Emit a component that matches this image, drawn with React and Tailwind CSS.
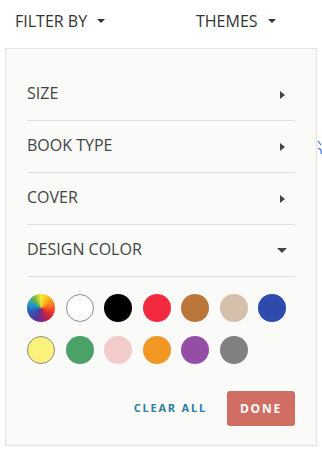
import React from 'react';

const swatches = [
  { name: 'multi', cls: 'bg-[conic-gradient(#f6e936_0deg,#f9b51c_36deg,#f47b20_72deg,#ee3a2c_108deg,#c4203f_144deg,#7a2a8c_180deg,#4b3c9c_216deg,#2f5cb3_252deg,#1a9ad6_288deg,#6bb345_324deg,#f6e936_360deg)]' },
  { name: 'white', cls: 'bg-white border border-[#8a8a8a]' },
  { name: 'black', cls: 'bg-black' },
  { name: 'red', cls: 'bg-[#f2293f]' },
  { name: 'brown', cls: 'bg-[#bb773a]' },
  { name: 'beige', cls: 'bg-[#d3bfaa]' },
  { name: 'blue', cls: 'bg-[#2d4aad]' },
  { name: 'yellow', cls: 'bg-[#faf27c] border border-[#8a8a8a]' },
  { name: 'green', cls: 'bg-[#4aa268]' },
  { name: 'pink', cls: 'bg-[#f2cccb]' },
  { name: 'orange', cls: 'bg-[#f29624]' },
  { name: 'purple', cls: 'bg-[#954ea6]' },
  { name: 'gray', cls: 'bg-[#808080]' },
];

const CaretDown = ({ className = '' }) => (
  <span
    className={`inline-block w-0 h-0 border-l-[4px] border-r-[4px] border-t-[4px] border-l-transparent border-r-transparent border-t-[#333] ${className}`}
  />
);

const CaretRight = () => (
  <span className="inline-block w-0 h-0 border-t-[4px] border-b-[4px] border-l-[5px] border-t-transparent border-b-transparent border-l-[#444]" />
);

const FilterRow = ({ label, open }) => (
  <div className="flex items-center justify-between h-[52px] border-b border-[#e2e0dc]">
    <span className="text-[16px] text-[#444] mb-[3px]">{label}</span>
    {open ? (
      <span className="inline-block w-0 h-0 mr-[8px] border-l-[5px] border-r-[5px] border-t-[5px] border-l-transparent border-r-transparent border-t-[#444]" />
    ) : (
      <span className="mr-[10px] flex">
        <CaretRight />
      </span>
    )}
  </div>
);

const App = () => {
  return (
    <main className="relative w-[322px] h-[449px] overflow-hidden bg-white font-['Open_Sans','Lato',sans-serif]">
      <div className="flex items-center h-[48px] pb-[7px] pl-[15px] text-[16px] text-[#333]">
        <div className="flex items-center w-[181px]">
          <span>FILTER BY</span>
          <CaretDown className="ml-[10px]" />
        </div>
        <div className="flex items-center">
          <span>THEMES</span>
          <CaretDown className="ml-[10px]" />
        </div>
      </div>

      <div className="ml-[5px] w-[312px] border border-[#e6e2da] bg-[#fafaf8] px-[21px] pt-[20px] pb-[19px]">
        <FilterRow label="SIZE" />
        <FilterRow label="BOOK TYPE" />
        <FilterRow label="COVER" />
        <FilterRow label="DESIGN COLOR" open />

        <div className="grid grid-cols-7 gap-x-[10.5px] gap-y-[14px] pt-[17px] w-[259px]">
          {swatches.map((s) => (
            <span key={s.name} className={`block w-[28px] h-[28px] rounded-full ${s.cls}`} />
          ))}
        </div>

        <div className="flex items-center justify-end gap-[20px] mt-[27px]">
          <button className="text-[11px] font-bold tracking-[1.8px] text-[#2b7fa1]">CLEAR ALL</button>
          <button className="w-[68px] h-[35px] rounded-[3px] bg-[#d06e63] text-white text-[12px] font-bold tracking-[1.8px]">
            DONE
          </button>
        </div>
      </div>

      <svg className="absolute left-[317px] top-[140px]" width="8" height="16" viewBox="0 0 8 16">
        <path d="M1 1 L4 5 M1 9 C3 8 5 10 4 14" stroke="#3b6fc4" strokeWidth="1.2" fill="none" />
      </svg>
    </main>
  );
};

export default App;
